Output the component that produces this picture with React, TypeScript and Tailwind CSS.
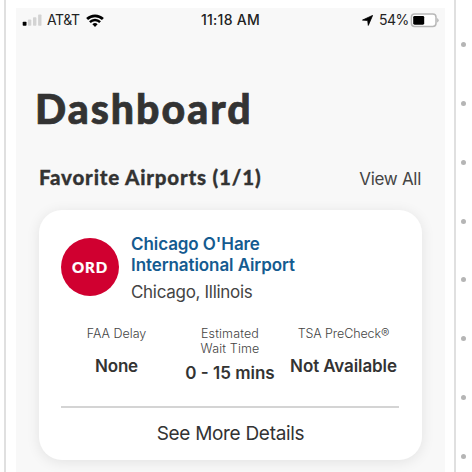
function Signal() {
  return (
    <svg width="20" height="12" viewBox="0 0 20 12" className="shrink-0">
      <rect x="0.7" y="7.7" width="3.8" height="4" rx="0.8" fill="#000" />
      <rect x="5.9" y="5.6" width="3.4" height="6.1" rx="0.8" fill="#d3d3d3" />
      <rect x="11" y="3.2" width="3.4" height="8.5" rx="0.8" fill="#d3d3d3" />
      <rect x="16.1" y="0.4" width="3.4" height="11.3" rx="0.8" fill="#d3d3d3" />
    </svg>
  );
}

function Wifi() {
  return (
    <svg width="18" height="13" viewBox="0 0 18 13" className="shrink-0" fill="none" stroke="#000">
      <path d="M1.1 5 A11.3 11.3 0 0 1 16.9 5" strokeWidth="2.7" />
      <path d="M3.9 8.2 A7.1 7.1 0 0 1 14.1 8.2" strokeWidth="2.4" />
      <path d="M9 12.9 L6.4 10.3 A3.7 3.7 0 0 1 11.6 10.3 Z" fill="#000" stroke="none" />
    </svg>
  );
}

function LocationArrow() {
  return (
    <svg width="11" height="11" viewBox="0 0 11 11" className="shrink-0">
      <path d="M10.6 0.4 L6.3 10.4 L5.7 5.5 L0.5 5.1 Z" fill="#000" stroke="#000" strokeWidth="0.8" strokeLinejoin="round" />
    </svg>
  );
}

function Battery() {
  return (
    <svg width="29" height="15" viewBox="0 0 29 15" className="shrink-0">
      <rect x="1.4" y="1" width="24.6" height="12.4" rx="3.2" fill="#fff" stroke="#b8b8b8" strokeWidth="1.5" />
      <rect x="3.2" y="2.9" width="11" height="8.8" rx="1.4" fill="#000" />
      <path d="M26.7 4.8 Q28.8 5.8 28.8 7.3 Q28.8 8.8 26.7 9.8 Z" fill="#c0c0c0" />
    </svg>
  );
}

const dots = [0, 1, 2, 3, 4, 5, 6, 7];

export default function App() {
  return (
    <div className="flex h-[472px] w-[472px] overflow-hidden bg-white pl-[4px] font-['Inter','Liberation_Sans',sans-serif] whitespace-nowrap text-[#333]">
      <div className="flex w-[452px] shrink-0 border-l-[2.5px] border-r-[2.5px] border-[#e0e0e0] pt-[8px] pl-[10px]">
        <main className="flex h-[464px] w-[429px] shrink-0 flex-col bg-[#f8f8f8]">
          <div className="mt-[2px] grid h-5 grid-cols-[185px_64px_1fr] text-[14px] leading-5">
            <div className="flex items-center pl-[6px]">
              <Signal />
              <span className="ml-[5px] w-[33px] tracking-[-0.4px] text-[#222]">AT&amp;T</span>
              <span className="ml-[6px]"><Wifi /></span>
            </div>
            <span className="font-medium tracking-[0.25px] text-[#222]">11:18 AM</span>
            <div className="flex items-center justify-end pr-[6px]">
              <LocationArrow />
              <span className="ml-[6px] w-[29px] tracking-[-0.5px] text-[#222]">54%</span>
              <span className="ml-[2px]"><Battery /></span>
            </div>
          </div>

          <h1 className="mt-[55px] ml-[19px] font-['Lato',sans-serif] text-[41px] leading-[48px] font-black tracking-[2px] [-webkit-text-stroke:0.7px_#333]">Dashboard</h1>

          <div className="mt-[32px] flex h-6 justify-between pr-[24px] pl-[23px]">
            <h2 className="font-['Lato',sans-serif] text-[20.5px] leading-6 font-black tracking-[0.8px] [-webkit-text-stroke:0.3px_#333]">Favorite Airports (1/1)</h2>
            <span className="pt-[1.5px] text-[17px] leading-6 tracking-[-0.3px] text-[#444]">View All</span>
          </div>

          <section className="mt-[21px] ml-[23px] flex h-[250px] w-[383px] flex-col rounded-[23px] bg-white px-[22px] shadow-[0_2px_14px_rgba(0,0,0,0.09)]">
            <div className="flex pt-[24px]">
              <div className="mt-[4px] flex h-[58px] w-[58px] items-center justify-center rounded-full bg-[#d00030] font-['Lato',sans-serif] text-[15px] font-black tracking-[0.9px] text-white [-webkit-text-stroke:0.2px_#fff]">ORD</div>
              <div className="ml-[12px]">
                <h3 className="text-[17px] leading-[20.5px] font-semibold tracking-[-0.08px] text-[#145b90]">
                  Chicago O'Hare<br />International Airport
                </h3>
                <p className="mt-[5px] text-[17px] leading-6 tracking-[-0.3px] text-[#444]">Chicago, Illinois</p>
              </div>
            </div>

            <div className="mt-[22px] grid h-[80px] grid-cols-[111px_116px_111px] text-center">
              <div>
                <p className="text-[12.5px] leading-[15px] font-light text-[#444]">FAA Delay</p>
                <p className="mt-[14.5px] text-[17px] leading-5 font-semibold tracking-[-0.2px]">None</p>
              </div>
              <div>
                <p className="text-[12.5px] leading-[15px] font-light tracking-[0.15px] text-[#444]">Estimated<br />Wait Time</p>
                <p className="mt-[7px] text-[17px] leading-5 font-semibold">0 - 15 mins</p>
              </div>
              <div>
                <p className="text-[12.5px] leading-[15px] font-light tracking-[-0.1px] text-[#444]">TSA PreCheck®</p>
                <p className="mt-[14.5px] text-[17px] leading-5 font-semibold tracking-[-0.1px]">Not Available</p>
              </div>
            </div>

            <div className="h-[2px] w-[338px] bg-[#d4d4d4]" />
            <p className="mt-[14px] text-center text-[19px] leading-6 tracking-[-0.3px]">See More Details</p>
          </section>
        </main>
      </div>

      <div className="ml-[5px] flex flex-col gap-[53.9px] pt-[41.9px]">
        {dots.map((d) => (
          <div key={d} className="h-[5px] w-[5px] shrink-0 rounded-full bg-[#b5b5b5]" />
        ))}
      </div>
    </div>
  );
}
